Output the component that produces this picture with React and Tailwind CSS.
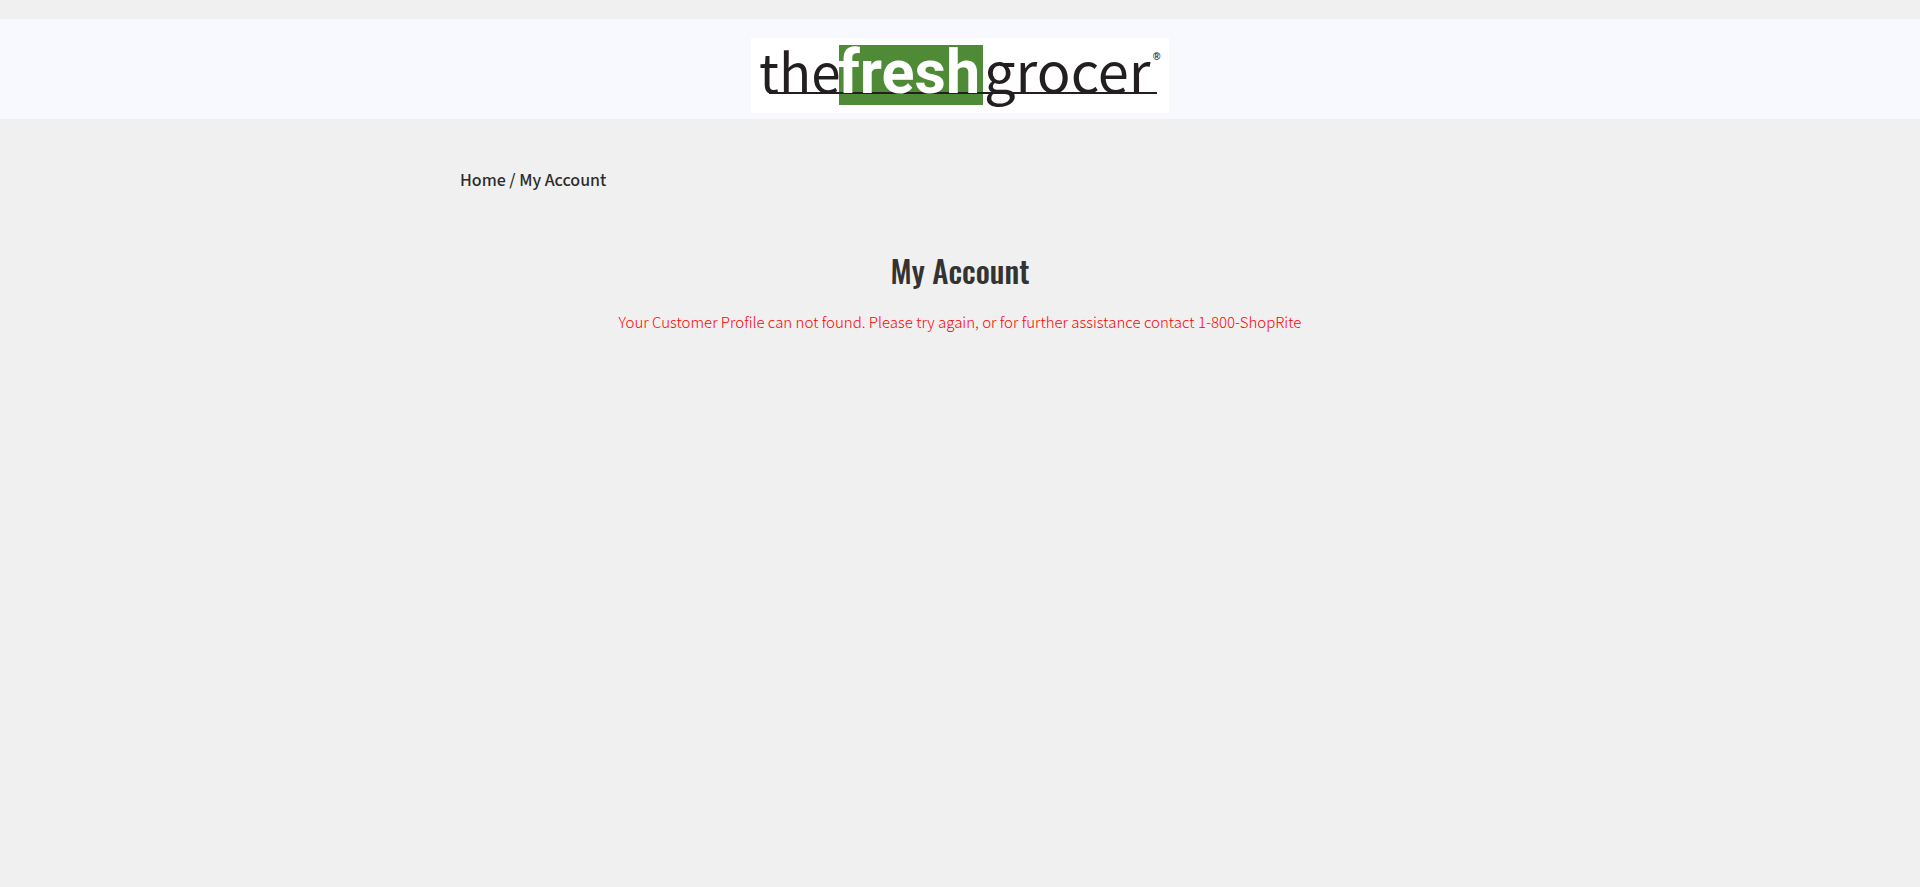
function Logo() {
  return (
    <svg
      viewBox="0 0 418 75"
      role="img"
      aria-label="The Fresh Grocer"
      className="block w-[418px] max-w-full overflow-visible"
    >
      <rect width="418" height="75" fill="#ffffff" />
      <rect x="88" y="7" width="144" height="60" fill="#4f8a36" />
      <rect x="18" y="54" width="388" height="2" fill="#231f20" />
      <g fontFamily="'Noto Sans CJK SC', 'Open Sans', sans-serif" fill="#231f20">
        <text x="8" y="55" fontSize="53">the</text>
        <text x="233" y="55" fontSize="56">grocer</text>
      </g>
      <text
        x="87"
        y="55"
        fontFamily="Roboto, sans-serif"
        fontSize="61"
        fontWeight="700"
        fill="#ffffff"
      >
        fresh
      </text>
      <text x="402" y="22" fontFamily="'Liberation Sans', sans-serif" fontSize="10" fontWeight="700" fill="#231f20">
        ®
      </text>
    </svg>
  );
}

export default function App() {
  return (
    <div className="min-h-screen bg-[#f0f0f0] pt-[19px] font-['Source_Sans_Pro','Source_Sans_3','Noto_Sans_CJK_SC',sans-serif]">
      <header className="flex justify-center bg-[#f8f9ff] pt-[19px] pb-1.5">
        <a href="#home">
          <Logo />
        </a>
      </header>
      <main className="mx-auto max-w-[1000px] pt-[50px]">
        <nav aria-label="Breadcrumb" className="text-lg leading-6 font-medium text-[#2b2b2b]">
          <a href="#home">Home</a> / <a href="#account">My Account</a>
        </nav>
        <h1 className="mt-[57px] text-center font-['Oswald','Liberation_Sans_Narrow','Liberation_Sans',sans-serif] text-[31px] leading-10 font-medium text-[#333333]">
          My Account
        </h1>
        <p className="mt-5 text-center font-['Noto_Sans_CJK_SC','Source_Sans_Pro',sans-serif] text-[15px] leading-6 font-light text-[#ff0000]">
          Your Customer Profile can not found. Please try again, or for further assistance contact
          1-800-ShopRite
        </p>
      </main>
    </div>
  );
}
